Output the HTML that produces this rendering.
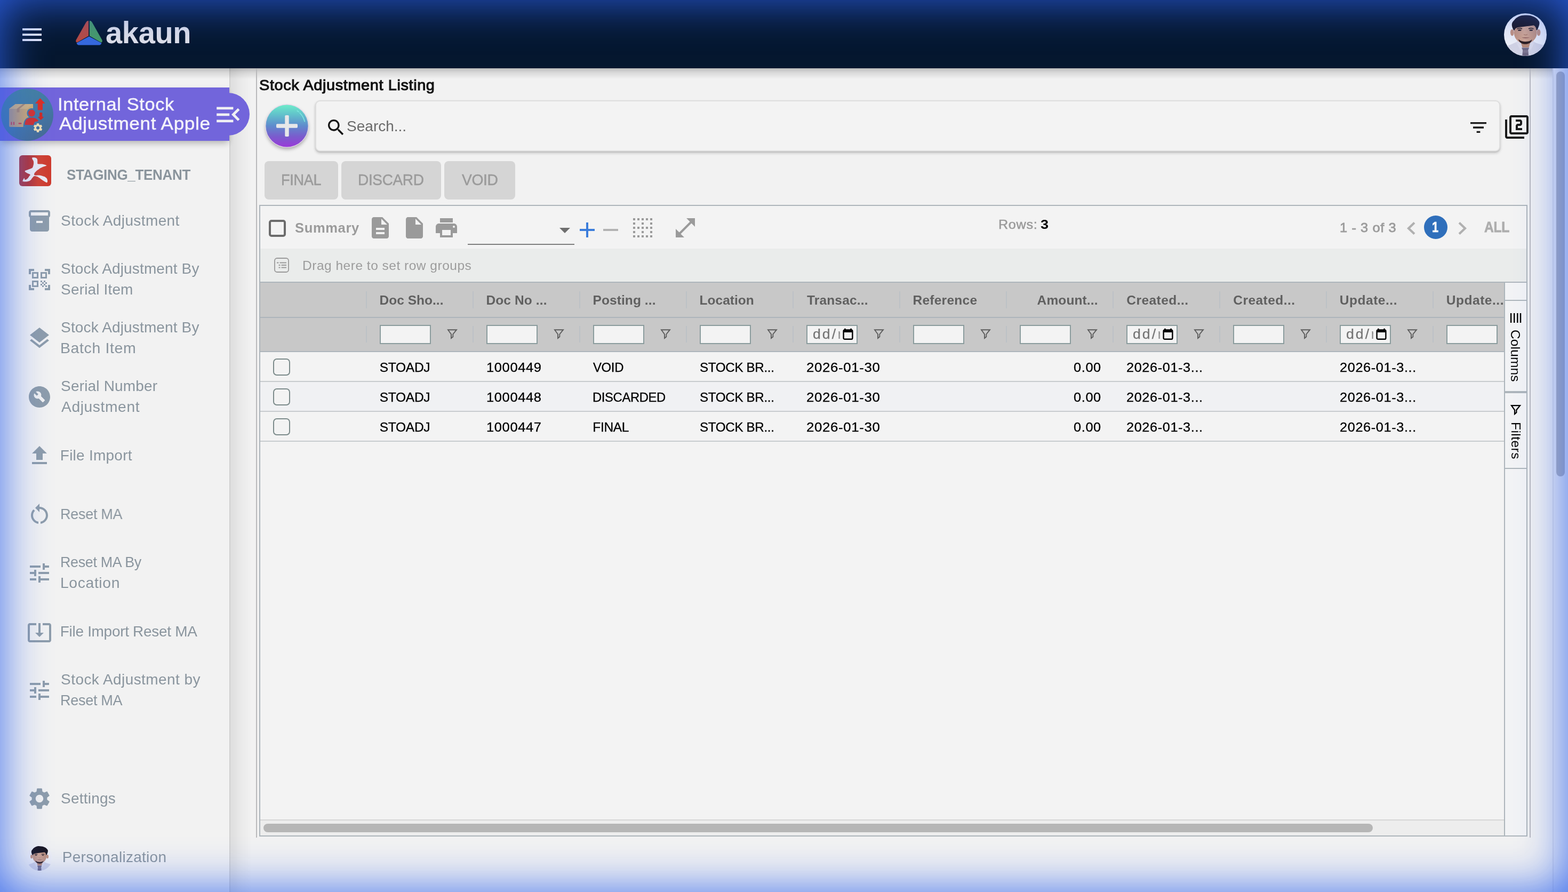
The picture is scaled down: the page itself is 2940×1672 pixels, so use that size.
<!DOCTYPE html>
<html lang="en">
<head>
<meta charset="utf-8">
<title>Stock Adjustment Listing</title>
<style>
*{box-sizing:border-box;margin:0;padding:0}
html,body{width:2940px;height:1672px;overflow:hidden;background:#f2f2f2}
body{font-family:"Liberation Sans",sans-serif;position:relative}
#page{position:absolute;left:0;top:0;width:2940px;height:1672px;overflow:hidden;will-change:transform}
.t{position:absolute;white-space:nowrap;line-height:1;display:block;transform-origin:0 50%}
.i{position:absolute;display:block;overflow:visible}
.b{position:absolute;display:block}
#glow{position:absolute;left:0;top:0;width:2940px;height:1672px;pointer-events:none;box-shadow:inset 0 0 86px 0 rgba(46,98,236,.94)}
#vscroll{position:absolute;left:2911px;top:128px;width:29px;height:1544px;background:#f0f0f2;border-left:2px solid #dedee4}
#vthumb{position:absolute;left:5px;top:6px;width:16px;height:759px;border-radius:8px;background:#b4b4b8}

h1.t{font-weight:400}
@media (max-width:1600px){html,body{width:1470px;height:836px}#page{transform:scale(.5);transform-origin:0 0}}
ul{list-style:none}a{color:inherit;text-decoration:none}

</style>
</head>
<body>
<div id="page">
<div id="underlay">
<div class="b" style="left:0px;top:128px;width:2940px;height:20px;background:linear-gradient(to bottom,rgba(0,0,0,.22),rgba(0,0,0,.10) 40%,rgba(0,0,0,0))"></div>
</div>
<aside id="sidenav">
<div class="b" style="left:430px;top:128px;width:50px;height:1544px;background:linear-gradient(to right,rgba(0,0,0,.085),rgba(0,0,0,.03) 45%,rgba(0,0,0,0) 85%)"></div>
<div class="b" style="left:430px;top:128px;width:2px;height:1544px;background:rgba(0,0,0,.06)"></div>
<div class="b" style="left:0px;top:164px;width:430px;height:100px;background:#7265db;box-shadow:0 6px 12px -2px rgba(0,0,0,.28)"></div>
<div class="b" style="left:388px;top:174px;width:80px;height:80px;background:#7265db;border-radius:50%"></div>
<div class="b" style="left:0px;top:164px;width:430px;height:100px;background:#7265db"></div>
<svg class="i" style="left:398.8px;top:186.2px;" width="57.6" height="57.6" viewBox="0 0 24 24"><path fill="#f0f0f4" d="M3 18h13v-2H3v2zm0-5h10v-2H3v2zm0-7v2h13V6H3zm18 9.59L17.42 12 21 8.41 19.59 7l-5 5 5 5L21 15.59z"/></svg>
<svg class="i" style="left:2px;top:166px" width="98" height="98" viewBox="0 0 98 98">
<defs><linearGradient id="apg" x1="0.2" y1="0" x2="0.8" y2="1"><stop offset="0" stop-color="#46859d"/><stop offset=".55" stop-color="#4379a6"/><stop offset="1" stop-color="#476a93"/></linearGradient>
<linearGradient id="bxg" x1="0" y1="0" x2="1" y2="0"><stop offset="0" stop-color="#b59b80"/><stop offset="1" stop-color="#d8ae6c"/></linearGradient></defs>
<circle cx="49" cy="49" r="49" fill="url(#apg)"/>
<path d="M15 38 L27 29 L60 29 L60 45 L48 60 L45 72 L17 72 Q15 72 15 70 Z" fill="url(#bxg)"/>
<path d="M15 38 L27 29 L60 29 L49 38 Z" fill="#d6b57e"/>
<path d="M29.500 38 L41 29 L45.500 29 L34.500 38 L34.500 44.500 L29.500 44.500 Z" fill="#ae8a6c"/>
<rect x="18.500" y="62.500" width="2" height="5.500" fill="#cf3a4a"/><rect x="23" y="62.500" width="2" height="5.500" fill="#cf3a4a"/><rect x="32.500" y="64.200" width="6" height="2.400" rx="1" fill="#cf3a4a"/>
<circle cx="57.500" cy="46" r="9.200" fill="#4379a6"/><path d="M41.500 72 C41.500 58 48 53 57.500 53 C67 53 72 57 72 62 L64 70 L41.500 72 Z" fill="#4379a6"/>
<circle cx="57.500" cy="46" r="6.400" fill="#d8322d"/>
<path d="M44.500 68 C44.500 58 50 54.500 57.500 54.500 C64 54.500 68.500 57 70 61 L63 62.500 L60.500 68.500 Z" fill="#d3302c"/>
<path d="M73.200 18.600 L81.800 27.400 L77.400 27.400 L77.400 39.800 L69.200 39.800 L69.200 27.400 L64.600 27.400 Z" fill="#dc2f25" stroke="#dc2f25" stroke-width="1" stroke-linejoin="round"/>
<path d="M72.600 45.600 L76.800 45.600 L76.800 53.400 L79.600 53.400 L74.700 58.600 L69.800 53.400 L72.600 53.400 Z" fill="#cf2c26" stroke="#cf2c26" stroke-width="1" stroke-linejoin="round"/>
<g transform="translate(58.600 63.100) scale(.87)"><path fill="#f1dfb2" d="M19.140 12.940c.04-.3.060-.61.060-.94 0-.32-.02-.64-.07-.94l2.030-1.580c.18-.14.230-.41.120-.61l-1.920-3.320c-.12-.22-.37-.29-.59-.22l-2.390.960c-.5-.38-1.030-.7-1.620-.94l-.36-2.540c-.04-.24-.24-.41-.48-.41h-3.840c-.24 0-.43.170-.47.410l-.36 2.540c-.59.240-1.130.570-1.620.940l-2.390-.96c-.22-.08-.47 0-.59.220L2.740 8.870c-.12.210-.08.470.120.610l2.030 1.580c-.05.300-.09.630-.09.940s.020.640.070.940l-2.030 1.580c-.18.140-.23.410-.12.610l1.920 3.320c.120.220.370.290.590.220l2.390-.96c.5.380 1.030.7 1.620.94l.36 2.540c.05.240.240.410.480.410h3.840c.24 0 .44-.17.470-.41l.36-2.540c.59-.24 1.130-.56 1.620-.94l2.390.960c.22.080.47 0 .59-.22l1.920-3.320c.12-.22.070-.47-.12-.61l-2.010-1.580zM12 15.600c-1.980 0-3.600-1.620-3.600-3.600s1.620-3.600 3.600-3.600 3.600 1.620 3.600 3.600-1.620 3.600-3.600 3.600z"/></g>
</svg>
<span class="t" style="left:108.32px;top:179px;font-size:33px;letter-spacing:0.600px;transform:scaleX(1.0409);color:#f4f3fb;-webkit-text-stroke:0.45px #f4f3fb;">Internal Stock</span>
<span class="t" style="left:111.00px;top:215px;font-size:33px;letter-spacing:0.600px;transform:scaleX(1.0645);color:#f4f3fb;-webkit-text-stroke:0.45px #f4f3fb;">Adjustment Apple</span>
<svg class="i" style="left:36px;top:291px" width="60" height="58" viewBox="0 0 60 58">
<defs><linearGradient id="tng" x1="0" y1="0" x2="1" y2="0"><stop offset="0" stop-color="#a93d4d"/><stop offset=".28" stop-color="#b2353a"/><stop offset=".6" stop-color="#d14434"/><stop offset="1" stop-color="#cf3a2c"/></linearGradient></defs>
<rect width="60" height="58" rx="6" fill="url(#tng)"/>
<path d="M25.6 4.3 C27.0 4.1 28.2 4.0 30.0 4.6 C31.8 5.2 32.4 5.4 33.4 6.8 C34.4 8.2 34.0 8.8 34.2 10.5 C34.4 12.2 34.0 12.7 34.3 14.0 C34.6 15.3 33.3 15.6 35.3 16.2 C37.3 16.8 39.5 16.1 43.0 16.6 C46.5 17.1 48.5 17.8 50.3 18.5 C52.1 19.2 52.1 19.0 50.6 19.8 C49.1 20.6 47.1 20.7 44.0 22.1 C40.9 23.5 40.0 24.0 37.1 25.9 C34.2 27.8 33.6 28.2 31.5 30.3 C29.4 32.4 28.6 33.3 28.2 35.0 C27.8 36.7 27.7 37.0 29.8 37.6 C31.9 38.2 33.5 37.2 37.1 37.6 C40.7 38.0 42.2 38.4 45.3 39.4 C48.4 40.4 48.5 40.4 50.3 42.1 C52.0 43.8 52.3 44.5 52.8 46.5 C53.3 48.5 53.3 50.0 52.4 50.8 C51.5 51.6 51.1 50.9 49.0 49.9 C46.9 48.9 46.2 48.3 43.4 46.5 C40.6 44.7 39.6 43.7 37.1 42.1 C34.6 40.5 34.9 40.5 32.8 39.8 C30.7 39.1 29.9 38.5 28.0 39.2 C26.1 39.9 26.3 40.8 24.6 42.6 C22.9 44.4 23.1 45.6 20.9 47.1 C18.7 48.6 18.4 48.7 15.3 49.2 C12.2 49.7 9.8 49.5 7.8 49.2 C5.8 48.9 6.2 49.3 6.6 47.8 C7.0 46.3 8.4 43.3 9.4 42.9 C10.4 42.5 9.5 45.6 10.9 45.9 C12.3 46.2 13.4 45.6 15.3 44.0 C17.2 42.4 17.8 40.8 19.0 39.0 C20.2 37.2 21.6 37.6 20.4 36.2 C19.2 34.8 16.3 34.5 14.0 33.0 C11.7 31.5 10.1 31.0 10.7 29.6 C11.3 28.2 13.7 28.3 16.5 27.1 C19.3 25.9 20.6 26.0 22.8 24.6 C25.0 23.2 24.9 23.7 25.9 20.9 C26.9 18.1 27.3 15.9 27.1 12.8 C26.9 9.7 25.6 9.5 24.9 7.8 C24.2 6.1 24.0 6.2 24.2 5.4 C24.4 4.6 24.2 4.5 25.6 4.3 Z" fill="#ecebf3"/>
</svg>
<span class="t" style="left:124.59px;top:315px;font-size:27px;letter-spacing:-0.350px;transform:scaleX(0.9647);font-weight:700;color:#8a949c;">STAGING_TENANT</span>
<nav aria-label="Main menu">
<ul>
<li>
<a>
<svg class="i" style="left:50px;top:390px;" width="48" height="48" viewBox="0 0 24 24"><path fill="#8e9dab" d="M20 2H4c-1 0-2 .9-2 2v3.01c0 .72.43 1.34 1 1.69V20c0 1.1 1.1 2 2 2h14c.9 0 2-.9 2-2V8.7c.57-.35 1-.97 1-1.69V4c0-1.1-1-2-2-2zm-5 12H9v-2h6v2zm5-7H4V4h16v3z"/></svg>
<span class="t" style="left:114.12px;top:400px;font-size:28px;letter-spacing:0.394px;color:#8a959e;">Stock Adjustment</span>
</a>
</li>
<li>
<a>
<svg class="i" style="left:50px;top:500px;" width="48" height="48" viewBox="0 0 24 24"><path fill="#8e9dab" d="M9.5 6.5v3h-3v-3h3M11 5H5v6h6V5zm-1.5 9.5v3h-3v-3h3M11 13H5v6h6v-6zm6.5-6.5v3h-3v-3h3M19 5h-6v6h6V5zm-6 8h1.5v1.5H13V13zm1.5 1.5H16V16h-1.5v-1.5zM16 13h1.5v1.5H16V13zm-3 3h1.5v1.5H13V16zm1.5 1.5H16V19h-1.5v-1.5zM16 16h1.5v1.5H16V16zm1.5-1.5H19V16h-1.5v-1.5zm0 3H19V19h-1.5v-1.5zM22 7h-2V4h-3V2h5v5zm0 15v-5h-2v3h-3v2h5zM2 22h5v-2H4v-3H2v5zM2 2v5h2V4h3V2H2z"/></svg>
<span class="t" style="left:114.12px;top:490px;font-size:28px;letter-spacing:0.141px;color:#8a959e;">Stock Adjustment By</span>
<span class="t" style="left:114.12px;top:529px;font-size:28px;letter-spacing:0.150px;color:#8a959e;">Serial Item</span>
</a>
</li>
<li>
<a>
<svg class="i" style="left:50px;top:610px;" width="48" height="48" viewBox="0 0 24 24"><path fill="#8e9dab" d="M11.99 18.54l-7.37-5.73L3 14.07l9 7 9-7-1.63-1.27-7.38 5.74zM12 16l7.36-5.73L21 9l-9-7-9 7 1.63 1.27L12 16z"/></svg>
<span class="t" style="left:114.12px;top:600px;font-size:28px;letter-spacing:0.141px;color:#8a959e;">Stock Adjustment By</span>
<span class="t" style="left:112.77px;top:639px;font-size:28px;letter-spacing:0.600px;transform:scaleX(1.0177);color:#8a959e;">Batch Item</span>
</a>
</li>
<li>
<a>
<svg class="i" style="left:50px;top:720px;" width="48" height="48" viewBox="0 0 24 24"><path fill="#8e9dab" d="M12 2C6.48 2 2 6.48 2 12s4.48 10 10 10 10-4.48 10-10S17.52 2 12 2zm4.9 13.49l-1.4 1.4c-.2.2-.51.2-.71 0l-3.41-3.41c-1.22.43-2.64.17-3.62-.81-1.11-1.11-1.3-2.79-.59-4.1l2.35 2.35 1.41-1.41-2.35-2.34c1.32-.71 2.99-.52 4.1.59.98.98 1.24 2.4.81 3.62l3.41 3.41c.19.19.19.51 0 .7z"/></svg>
<span class="t" style="left:114.12px;top:710px;font-size:28px;letter-spacing:0.172px;color:#8a959e;">Serial Number</span>
<span class="t" style="left:115.00px;top:749px;font-size:28px;letter-spacing:0.600px;transform:scaleX(1.0071);color:#8a959e;">Adjustment</span>
</a>
</li>
<li>
<a>
<svg class="i" style="left:50px;top:830px;" width="48" height="48" viewBox="0 0 24 24"><path fill="#8e9dab" d="M5 20h14v-2H5v2zm0-10h4v6h6v-6h4l-7-7-7 7z"/></svg>
<span class="t" style="left:112.81px;top:840px;font-size:28px;letter-spacing:0.244px;color:#8a959e;">File Import</span>
</a>
</li>
<li>
<a>
<svg class="i" style="left:50px;top:940.4px;" width="48" height="48" viewBox="0 0 24 24"><path fill="#8e9dab" d="M12 5V2L8 6l4 4V7c3.31 0 6 2.69 6 6 0 2.97-2.17 5.43-5 5.91v2.02c3.95-.49 7-3.85 7-7.93 0-4.42-3.58-8-8-8zm-6 8c0-1.65.67-3.15 1.76-4.24L6.34 7.34C4.9 8.79 4 10.79 4 13c0 4.08 3.05 7.44 7 7.93v-2.02c-2.83-.48-5-2.94-5-5.91z"/></svg>
<span class="t" style="left:112.88px;top:950px;font-size:28px;letter-spacing:-0.350px;transform:scaleX(0.9677);color:#8a959e;">Reset MA</span>
</a>
</li>
<li>
<a>
<svg class="i" style="left:50px;top:1050px;" width="48" height="48" viewBox="0 0 24 24"><path fill="#8e9dab" d="M3 17v2h6v-2H3zM3 5v2h10V5H3zm10 16v-2h8v-2h-8v-2h-2v6h2zM7 9v2H3v2h4v2h2V9H7zm14 4v-2H11v2h10zm-6-4h2V7h4V5h-4V3h-2v6z"/></svg>
<span class="t" style="left:112.90px;top:1040px;font-size:28px;letter-spacing:-0.350px;transform:scaleX(0.9614);color:#8a959e;">Reset MA By</span>
<span class="t" style="left:112.79px;top:1079px;font-size:28px;letter-spacing:0.600px;transform:scaleX(1.0122);color:#8a959e;">Location</span>
</a>
</li>
<li>
<a>
<svg class="i" style="left:50px;top:1160.5px;" width="48" height="48" viewBox="0 0 24 24"><path fill="#8e9dab" d="M12 16.5l4-4h-3v-9h-2v9H8l4 4zm9-13h-6v1.99h6v14.03H3V5.49h6V3.5H3c-1.1 0-2 .9-2 2v14c0 1.1.9 2 2 2h18c1.1 0 2-.9 2-2v-14c0-1.1-.9-2-2-2z"/></svg>
<span class="t" style="left:112.81px;top:1170px;font-size:28px;letter-spacing:-0.311px;color:#8a959e;">File Import Reset MA</span>
</a>
</li>
<li>
<a>
<svg class="i" style="left:50px;top:1270px;" width="48" height="48" viewBox="0 0 24 24"><path fill="#8e9dab" d="M3 17v2h6v-2H3zM3 5v2h10V5H3zm10 16v-2h8v-2h-8v-2h-2v6h2zM7 9v2H3v2h4v2h2V9H7zm14 4v-2H11v2h10zm-6-4h2V7h4V5h-4V3h-2v6z"/></svg>
<span class="t" style="left:114.12px;top:1260px;font-size:28px;letter-spacing:0.425px;color:#8a959e;">Stock Adjustment by</span>
<span class="t" style="left:112.88px;top:1299px;font-size:28px;letter-spacing:-0.350px;transform:scaleX(0.9677);color:#8a959e;">Reset MA</span>
</a>
</li>
<li>
<a>
<svg class="i" style="left:50px;top:1473px;" width="48" height="48" viewBox="0 0 24 24"><path fill="#8e9dab" d="M19.14 12.94c.04-.3.06-.61.06-.94 0-.32-.02-.64-.07-.94l2.03-1.58c.18-.14.23-.41.12-.61l-1.92-3.32c-.12-.22-.37-.29-.59-.22l-2.39.96c-.5-.38-1.03-.7-1.62-.94l-.36-2.54c-.04-.24-.24-.41-.48-.41h-3.84c-.24 0-.43.17-.47.41l-.36 2.54c-.59.24-1.13.57-1.62.94l-2.39-.96c-.22-.08-.47 0-.59.22L2.74 8.87c-.12.21-.08.47.12.61l2.03 1.58c-.05.3-.09.63-.09.94s.02.64.07.94l-2.03 1.58c-.18.14-.23.41-.12.61l1.92 3.32c.12.22.37.29.59.22l2.39-.96c.5.38 1.03.7 1.62.94l.36 2.54c.05.24.24.41.48.41h3.84c.24 0 .44-.17.47-.41l.36-2.54c.59-.24 1.13-.56 1.62-.94l2.39.96c.22.08.47 0 .59-.22l1.92-3.32c.12-.22.07-.47-.12-.61l-2.01-1.58zM12 15.6c-1.98 0-3.6-1.62-3.6-3.6s1.62-3.6 3.6-3.6 3.6 1.62 3.6 3.6-1.62 3.6-3.6 3.6z"/></svg>
<span class="t" style="left:114.12px;top:1483px;font-size:28px;letter-spacing:0.225px;color:#8a959e;">Settings</span>
</a>
</li>
<li>
<a>
<svg class="i" style="left:50px;top:1584px" width="48" height="48" viewBox="0 0 80 80">
<defs><clipPath id="avp"><circle cx="40" cy="40" r="40"/></clipPath>
<linearGradient id="avps" x1="0" y1="0" x2="1" y2="0"><stop offset="0" stop-color="#c0927e"/><stop offset=".45" stop-color="#d2a793"/><stop offset="1" stop-color="#bd8f7b"/></linearGradient></defs>
<g clip-path="url(#avp)">
<rect width="80" height="80" fill="#f1f1f5"/>
<path d="M0 80 L3 63 C10 59 17 57 23 54 L29 50 L52 50 L57 54 C63 57 70 58 77 61 L80 80 Z" fill="#d3d4e4"/>
<path d="M23 54 L29 50 L34.500 64 L31 70 Z" fill="#dcdcea"/><path d="M57 54 L52 50 L46.500 64 L50 70 Z" fill="#dcdcea"/>
<path d="M30 49 L51 49 L46.500 64 L34.500 64 Z" fill="#b88a77"/>
<path d="M33 64.400 L47.200 64.400 L45.200 69 L46.200 80 L34.200 80 L35.200 69 Z" fill="#6f6882"/>
<path d="M35.500 69 L44.800 69 L45.500 74 L34.800 74 Z" fill="#7d768f"/>
<ellipse cx="15.300" cy="36" rx="3.400" ry="6.200" fill="#c2927f"/>
<ellipse cx="65" cy="36" rx="3.400" ry="6.200" fill="#c2927f"/>
<path d="M19 26 C19 20 25 16 40 16 C55 16 61.500 20 61.500 26 L61.500 38 C61.500 47 52 57 40 57 C28 57 19 47 19 38 Z" fill="url(#avps)"/>
<path d="M27 48.500 C31 52 35 53 40 53 C45 53 49 52 52.500 49 C51.500 55 46 57.800 40 57.800 C34 57.800 28.500 55 27 48.500 Z" fill="#2c1d1e"/>
<path d="M33 45.500 C37 44.600 43 44.600 48.500 45.500 C44 47.400 37 47.400 33 45.500 Z" fill="#9c6b62"/>
<path d="M37 39.500 C39 40.800 42 40.800 44 39.500" fill="none" stroke="#a97966" stroke-width="1.200"/>
<path d="M24.500 29.400 C27 27.600 31 27.600 34 29" fill="none" stroke="#241a1c" stroke-width="1.500"/>
<path d="M46 29 C49 27.600 53 27.600 55.500 29.400" fill="none" stroke="#241a1c" stroke-width="1.500"/>
<ellipse cx="29.300" cy="31.600" rx="3.300" ry="1.500" fill="#3a2c30"/>
<ellipse cx="50.700" cy="31.600" rx="3.300" ry="1.500" fill="#3a2c30"/>
<path d="M17.800 31 C14 24 13 18 19 13 C24 6 33 3 41 3.600 C52 3 62 8 66 15.500 C67.500 20 65 25 63 30 C62.500 31.500 61.500 32 60.600 31 C60.600 27 58.500 24 55.600 22.600 C47 24 38 25 28 26 C23.500 26.500 20.500 28.500 19.600 31.500 C19 32.500 18.200 32 17.800 31 Z" fill="#19151f"/>
</g></svg>
<span class="t" style="left:116.81px;top:1593px;font-size:28px;letter-spacing:0.265px;color:#8a959e;">Personalization</span>
</a>
</li>
</ul>
</nav>
</aside>
<main id="content">
<div class="b" style="left:480px;top:128px;width:2px;height:1442px;background:#b9b9bb"></div>
<div class="b" style="left:2868.4px;top:128px;width:2px;height:1442px;background:#b9b9bf"></div>
<h1 class="t" style="left:486.10px;top:146px;font-size:28px;letter-spacing:0.600px;transform:scaleX(1.0316);color:#121212;-webkit-text-stroke:1.1px #121212;">Stock Adjustment Listing</h1>
<svg class="i" style="left:488px;top:186px" width="100" height="104" viewBox="-10 -10 100 104">
<defs><linearGradient id="fabg" x1="0" y1="0" x2="0" y2="1"><stop offset="0" stop-color="#6eecca"/><stop offset=".22" stop-color="#62c4cb"/><stop offset=".5" stop-color="#5f8bcd"/><stop offset=".75" stop-color="#7a5ccd"/><stop offset="1" stop-color="#9a3ad8"/></linearGradient>
<filter id="fabs" x="-30%" y="-30%" width="160%" height="170%"><feGaussianBlur stdDeviation="3.2"/></filter></defs>
<circle cx="40" cy="44" r="40" fill="rgba(0,0,0,.30)" filter="url(#fabs)"/>
<circle cx="40" cy="40" r="40.8" fill="#e3d6e9"/>
<circle cx="40" cy="40" r="39.6" fill="url(#fabg)"/>
<path d="M59.2 11.6 A34 34 0 0 1 73.2 31.6" fill="none" stroke="#7fe9e0" stroke-width="1.6" stroke-linecap="round" stroke-dasharray="3.5 3 40"/>
<rect x="20" y="36.3" width="40" height="7.4" rx="1.8" fill="#e7e7e9"/>
<rect x="36.3" y="20" width="7.4" height="40" rx="1.8" fill="#e7e7e9"/>
</svg>
<div class="b" style="left:591px;top:188px;width:2222px;height:96px;background:#f3f3f3;border:2px solid #dedede;border-radius:9px;box-shadow:0 3px 5px 0 rgba(0,0,0,.20),0 1px 2px rgba(0,0,0,.10)"></div>
<svg class="i" style="left:610px;top:219px;" width="40" height="40" viewBox="0 0 24 24"><path fill="#151515" d="M15.5 14h-.79l-.28-.27C15.41 12.59 16 11.11 16 9.5 16 5.91 13.09 3 9.5 3S3 5.91 3 9.5 5.91 16 9.5 16c1.61 0 3.09-.59 4.23-1.57l.27.28v.79l5 4.99L20.49 19l-4.99-5zm-6 0C7.01 14 5 11.99 5 9.5S7.01 5 9.5 5 14 7.01 14 9.5 11.99 14 9.5 14z"/></svg>
<span class="t" style="left:650.12px;top:223px;font-size:28px;letter-spacing:-0.006px;color:#6a6a6a;">Search...</span>
<svg class="i" style="left:2752px;top:219px;" width="40" height="40" viewBox="0 0 24 24"><path fill="#1a1a1a" d="M10 18h4v-2h-4v2zM3 6v2h18V6H3zm3 7h12v-2H6v2z"/></svg>
<svg class="i" style="left:2820px;top:214px;" width="48" height="48" viewBox="0 0 24 24"><path fill="#1a1a1a" d="M3 5H1v16c0 1.1.9 2 2 2h16v-2H3V5zm18-4H7c-1.1 0-2 .9-2 2v14c0 1.1.9 2 2 2h14c1.1 0 2-.9 2-2V3c0-1.1-.9-2-2-2zm0 16H7V3h14v14zm-4-4h-4v-2h2c1.1 0 2-.89 2-2V7c0-1.11-.9-2-2-2h-4v2h4v2h-2c-1.1 0-2 .89-2 2v4h6v-2z"/></svg>
<div role="button" aria-disabled="true">
<div class="b" style="left:496px;top:302px;width:138px;height:72px;background:#d5d5d5;border-radius:8px"></div>
<span class="t" style="left:527.48px;top:323px;font-size:29px;letter-spacing:-0.350px;transform:scaleX(0.9358);color:#9b9b9b;-webkit-text-stroke:0.5px #9b9b9b;">FINAL</span>
</div>
<div role="button" aria-disabled="true">
<div class="b" style="left:640px;top:302px;width:187px;height:72px;background:#d5d5d5;border-radius:8px"></div>
<span class="t" style="left:671.41px;top:323px;font-size:29px;letter-spacing:-0.350px;transform:scaleX(0.9653);color:#9b9b9b;-webkit-text-stroke:0.5px #9b9b9b;">DISCARD</span>
</div>
<div role="button" aria-disabled="true">
<div class="b" style="left:833px;top:302px;width:133px;height:72px;background:#d5d5d5;border-radius:8px"></div>
<span class="t" style="left:866.00px;top:323px;font-size:29px;letter-spacing:-0.350px;transform:scaleX(0.9732);color:#9b9b9b;-webkit-text-stroke:0.5px #9b9b9b;">VOID</span>
</div>
<section id="grid">
<div class="b" style="left:486px;top:384px;width:2378px;height:1184px;border:2px solid #adb5bb;background:#f3f3f3"></div>
<div role="toolbar">
<label>
<div class="b" style="left:504px;top:412px;width:32px;height:32px;border:4px solid #6b6b6b;border-radius:5px"></div>
<span class="t" style="left:552.60px;top:415px;font-size:25px;letter-spacing:0.600px;transform:scaleX(1.0229);font-weight:700;color:#9b9b9b;">Summary</span>
</label>
<svg class="i" style="left:689px;top:403px;" width="48" height="48" viewBox="0 0 24 24"><path fill="#9a9a9a" d="M14 2H6c-1.1 0-1.99.9-1.99 2L4 20c0 1.1.89 2 1.99 2H18c1.1 0 2-.9 2-2V8l-6-6zm2 16H8v-2h8v2zm0-4H8v-2h8v2zm-3-5V3.5L18.5 9H13z"/></svg>
<svg class="i" style="left:753px;top:403px;" width="48" height="48" viewBox="0 0 24 24"><path fill="#9a9a9a" d="M6 2c-1.1 0-1.99.9-1.99 2L4 20c0 1.1.89 2 1.99 2H18c1.1 0 2-.9 2-2V8l-6-6H6zm7 7V3.5L18.5 9H13z"/></svg>
<svg class="i" style="left:813.4px;top:403px;" width="48" height="48" viewBox="0 0 24 24"><path fill="#9a9a9a" d="M19 8H5c-1.66 0-3 1.34-3 3v6h4v4h12v-4h4v-6c0-1.66-1.34-3-3-3zm-3 11H8v-5h8v5zm3-7c-.55 0-1-.45-1-1s.45-1 1-1 1 .45 1 1-.45 1-1 1zm-1-9H6v4h12V3z"/></svg>
<div class="b" style="left:877px;top:457px;width:200px;height:2px;background:#7d7d7d"></div>
<svg class="i" style="left:1035px;top:407px;" width="48" height="48" viewBox="0 0 24 24"><path fill="#6e6e6e" d="M7 10l5 5 5-5z"/></svg>
<svg class="i" style="left:1077px;top:407px;" width="48" height="48" viewBox="0 0 24 24"><path fill="#3b7ddb" d="M19 13h-6v6h-2v-6H5v-2h6V5h2v6h6v2z"/></svg>
<svg class="i" style="left:1121px;top:407px;" width="48" height="48" viewBox="0 0 24 24"><path fill="#b3b3b3" d="M19 13H5v-2h14v2z"/></svg>
<svg class="i" style="left:1181px;top:403px;" width="48" height="48" viewBox="0 0 24 24"><path fill="#9a9a9a" d="M7 5h2V3H7v2zm0 8h2v-2H7v2zm0 8h2v-2H7v2zm4-4h2v-2h-2v2zm0 4h2v-2h-2v2zm-8 0h2v-2H3v2zm0-4h2v-2H3v2zm0-4h2v-2H3v2zm0-4h2V7H3v2zm0-4h2V3H3v2zm8 8h2v-2h-2v2zm8 4h2v-2h-2v2zm0-4h2v-2h-2v2zm0 8h2v-2h-2v2zm0-12h2V7h-2v2zm-8 0h2V7h-2v2zm8-6v2h2V3h-2zm-8 2h2V3h-2v2zm4 16h2v-2h-2v2zm0-8h2v-2h-2v2zm0-8h2V3h-2v2z"/></svg>
<svg class="i" style="left:1261px;top:403px;" width="48" height="48" viewBox="0 0 24 24"><path fill="#9a9a9a" d="M21 11V3h-8l3.29 3.29-10 10L3 13v8h8l-3.29-3.29 10-10z"/></svg>
<div>
<span class="t" style="left:1872.03px;top:409px;font-size:24px;letter-spacing:0.600px;transform:scaleX(1.0517);color:#9a9a9a;-webkit-text-stroke:0.5px #9a9a9a;">Rows:</span>
<span class="t" style="left:1950.58px;top:409px;font-size:24px;transform:scaleX(1.1313);font-weight:700;color:#000;">3</span>
</div>
<div role="navigation" aria-label="Pagination">
<span class="t" style="left:2512.42px;top:415px;font-size:24px;letter-spacing:0.600px;transform:scaleX(1.0548);color:#9b9b9b;-webkit-text-stroke:0.8px #9b9b9b;">1 - 3 of 3</span>
<svg class="i" style="left:2634px;top:413px" width="24" height="30" viewBox="0 0 24 30"><path d="M18 4.5 L7 15 L18 25.5" fill="none" stroke="#b0b0b0" stroke-width="4.2"/></svg>
<div class="b" style="left:2670px;top:404px;width:44px;height:44px;background:#2f6fbb;border-radius:50%"></div>
<span class="t" style="left:2685.04px;top:412px;font-size:28px;transform:scaleX(0.7771);font-weight:700;color:#fff;-webkit-text-stroke:0.7px #fff;">1</span>
<svg class="i" style="left:2730px;top:413px" width="24" height="30" viewBox="0 0 24 30"><path d="M6 4.5 L17 15 L6 25.5" fill="none" stroke="#b0b0b0" stroke-width="4.2"/></svg>
<span class="t" style="left:2782.62px;top:412px;font-size:27.5px;letter-spacing:-0.350px;transform:scaleX(0.8948);font-weight:700;color:#adadad;-webkit-text-stroke:0.8px #adadad;">ALL</span>
</div>
</div>
<div>
<div class="b" style="left:488px;top:466px;width:2374px;height:62px;background:#eaeceb"></div>
<svg class="i" style="left:514px;top:483px" width="28" height="28" viewBox="0 0 28 28">
<rect x="1" y="1" width="26" height="26" rx="4.5" fill="none" stroke="#9a9a9a" stroke-width="1.8"/>
<path d="M5 9.5h3.5M10.5 9.5H23M8.5 14h3M13.5 14H23M8.5 18.5h3M13.5 18.5H23" stroke="#9a9a9a" stroke-width="1.8" fill="none"/></svg>
<span class="t" style="left:567.09px;top:486px;font-size:24.5px;letter-spacing:0.500px;color:#9c9c9c;">Drag here to set row groups</span>
</div>
<div class="b" style="left:488px;top:530px;width:2332px;height:130px;background:#c8c8c8"></div>
<div class="b" style="left:488px;top:528px;width:2374px;height:2px;background:#adb5bb"></div>
<div class="b" style="left:488px;top:594px;width:2332px;height:2px;background:#adb5bb"></div>
<div class="b" style="left:488px;top:658px;width:2332px;height:2px;background:#adb5bb"></div>
<div role="row">
<div class="b" style="left:686px;top:546px;width:2px;height:32px;background:#bcc1c6"></div>
<span class="t" role="columnheader" style="left:711.47px;top:551px;font-size:24.5px;letter-spacing:0.022px;font-weight:700;color:#606060;">Doc Sho...</span>
<div class="b" style="left:886px;top:546px;width:2px;height:32px;background:#bcc1c6"></div>
<span class="t" role="columnheader" style="left:911.47px;top:551px;font-size:24.5px;letter-spacing:0.111px;font-weight:700;color:#606060;">Doc No ...</span>
<div class="b" style="left:1086px;top:546px;width:2px;height:32px;background:#bcc1c6"></div>
<span class="t" role="columnheader" style="left:1111.47px;top:551px;font-size:24.5px;letter-spacing:0.092px;font-weight:700;color:#606060;">Posting ...</span>
<div class="b" style="left:1286px;top:546px;width:2px;height:32px;background:#bcc1c6"></div>
<span class="t" role="columnheader" style="left:1311.47px;top:551px;font-size:24.5px;letter-spacing:0.034px;font-weight:700;color:#606060;">Location</span>
<div class="b" style="left:1486px;top:546px;width:2px;height:32px;background:#bcc1c6"></div>
<span class="t" role="columnheader" style="left:1513.00px;top:551px;font-size:24.5px;letter-spacing:0.157px;font-weight:700;color:#606060;">Transac...</span>
<div class="b" style="left:1686px;top:546px;width:2px;height:32px;background:#bcc1c6"></div>
<span class="t" role="columnheader" style="left:1711.47px;top:551px;font-size:24.5px;letter-spacing:0.258px;font-weight:700;color:#606060;">Reference</span>
<div class="b" style="left:1886px;top:546px;width:2px;height:32px;background:#bcc1c6"></div>
<span class="t" role="columnheader" style="left:1944.62px;top:551px;font-size:24.5px;letter-spacing:0.110px;font-weight:700;color:#606060;">Amount...</span>
<div class="b" style="left:2086px;top:546px;width:2px;height:32px;background:#bcc1c6"></div>
<span class="t" role="columnheader" style="left:2112.23px;top:551px;font-size:24.5px;letter-spacing:0.474px;font-weight:700;color:#606060;">Created...</span>
<div class="b" style="left:2286px;top:546px;width:2px;height:32px;background:#bcc1c6"></div>
<span class="t" role="columnheader" style="left:2312.23px;top:551px;font-size:24.5px;letter-spacing:0.474px;font-weight:700;color:#606060;">Created...</span>
<div class="b" style="left:2486px;top:546px;width:2px;height:32px;background:#bcc1c6"></div>
<span class="t" role="columnheader" style="left:2511.85px;top:551px;font-size:24.5px;letter-spacing:0.518px;font-weight:700;color:#606060;">Update...</span>
<div class="b" style="left:2686px;top:546px;width:2px;height:32px;background:#bcc1c6"></div>
<span class="t" role="columnheader" style="left:2711.85px;top:551px;font-size:24.5px;letter-spacing:0.518px;font-weight:700;color:#606060;">Update...</span>
</div>
<div role="row">
<div>
<div class="b" style="left:686px;top:611px;width:2px;height:31px;background:#bcc1c6"></div>
<div class="b" style="left:712px;top:609px;width:96px;height:36px;background:#f3f3f3;border:2px solid #8b9c9d"></div>
<svg class="i" style="left:837.2px;top:616px" width="22" height="21" viewBox="0 0 22 21"><path d="M3 2.2 H19 L12.3 10.5 V15.2 L9 18 V10.5 Z" fill="none" stroke="#5c5c5c" stroke-width="1.9" stroke-linejoin="miter"/></svg>
</div>
<div>
<div class="b" style="left:886px;top:611px;width:2px;height:31px;background:#bcc1c6"></div>
<div class="b" style="left:912px;top:609px;width:96px;height:36px;background:#f3f3f3;border:2px solid #8b9c9d"></div>
<svg class="i" style="left:1037.2px;top:616px" width="22" height="21" viewBox="0 0 22 21"><path d="M3 2.2 H19 L12.3 10.5 V15.2 L9 18 V10.5 Z" fill="none" stroke="#5c5c5c" stroke-width="1.9" stroke-linejoin="miter"/></svg>
</div>
<div>
<div class="b" style="left:1086px;top:611px;width:2px;height:31px;background:#bcc1c6"></div>
<div class="b" style="left:1112px;top:609px;width:96px;height:36px;background:#f3f3f3;border:2px solid #8b9c9d"></div>
<svg class="i" style="left:1237.2px;top:616px" width="22" height="21" viewBox="0 0 22 21"><path d="M3 2.2 H19 L12.3 10.5 V15.2 L9 18 V10.5 Z" fill="none" stroke="#5c5c5c" stroke-width="1.9" stroke-linejoin="miter"/></svg>
</div>
<div>
<div class="b" style="left:1286px;top:611px;width:2px;height:31px;background:#bcc1c6"></div>
<div class="b" style="left:1312px;top:609px;width:96px;height:36px;background:#f3f3f3;border:2px solid #8b9c9d"></div>
<svg class="i" style="left:1437.2px;top:616px" width="22" height="21" viewBox="0 0 22 21"><path d="M3 2.2 H19 L12.3 10.5 V15.2 L9 18 V10.5 Z" fill="none" stroke="#5c5c5c" stroke-width="1.9" stroke-linejoin="miter"/></svg>
</div>
<div>
<div class="b" style="left:1486px;top:611px;width:2px;height:31px;background:#bcc1c6"></div>
<div class="b" style="left:1512px;top:609px;width:96px;height:36px;background:#f3f3f3;border:2px solid #8b9c9d"></div>
<span class="t" style="left:1524.17px;top:614px;font-size:25px;letter-spacing:2.800px;transform:scaleX(1.0666);color:#747474;-webkit-text-stroke:0.25px #747474;">dd/</span>
<span class="t" style="width:3.7px;overflow:hidden;left:1570.84px;top:614px;font-size:25px;color:#8a8a8a;">mm/yyyy</span>
<svg class="i" style="left:1580px;top:615px" width="20" height="23" viewBox="0 0 20 23"><path d="M4.4 .8v3.4M15.6 .8v3.4" stroke="#000" stroke-width="2.6" fill="none"/><rect x="1.6" y="3.4" width="16.800" height="17.400" rx="2.4" fill="none" stroke="#000" stroke-width="2.4"/><rect x="1.4" y="3.2" width="17.200" height="4.8" rx="1" fill="#000"/></svg>
<svg class="i" style="left:1637.2px;top:616px" width="22" height="21" viewBox="0 0 22 21"><path d="M3 2.2 H19 L12.3 10.5 V15.2 L9 18 V10.5 Z" fill="none" stroke="#5c5c5c" stroke-width="1.9" stroke-linejoin="miter"/></svg>
</div>
<div>
<div class="b" style="left:1686px;top:611px;width:2px;height:31px;background:#bcc1c6"></div>
<div class="b" style="left:1712px;top:609px;width:96px;height:36px;background:#f3f3f3;border:2px solid #8b9c9d"></div>
<svg class="i" style="left:1837.2px;top:616px" width="22" height="21" viewBox="0 0 22 21"><path d="M3 2.2 H19 L12.3 10.5 V15.2 L9 18 V10.5 Z" fill="none" stroke="#5c5c5c" stroke-width="1.9" stroke-linejoin="miter"/></svg>
</div>
<div>
<div class="b" style="left:1886px;top:611px;width:2px;height:31px;background:#bcc1c6"></div>
<div class="b" style="left:1912px;top:609px;width:96px;height:36px;background:#f3f3f3;border:2px solid #8b9c9d"></div>
<svg class="i" style="left:2037.2px;top:616px" width="22" height="21" viewBox="0 0 22 21"><path d="M3 2.2 H19 L12.3 10.5 V15.2 L9 18 V10.5 Z" fill="none" stroke="#5c5c5c" stroke-width="1.9" stroke-linejoin="miter"/></svg>
</div>
<div>
<div class="b" style="left:2086px;top:611px;width:2px;height:31px;background:#bcc1c6"></div>
<div class="b" style="left:2112px;top:609px;width:96px;height:36px;background:#f3f3f3;border:2px solid #8b9c9d"></div>
<span class="t" style="left:2124.17px;top:614px;font-size:25px;letter-spacing:2.800px;transform:scaleX(1.0666);color:#747474;-webkit-text-stroke:0.25px #747474;">dd/</span>
<span class="t" style="width:3.7px;overflow:hidden;left:2170.84px;top:614px;font-size:25px;color:#8a8a8a;">mm/yyyy</span>
<svg class="i" style="left:2180px;top:615px" width="20" height="23" viewBox="0 0 20 23"><path d="M4.4 .8v3.4M15.6 .8v3.4" stroke="#000" stroke-width="2.6" fill="none"/><rect x="1.6" y="3.4" width="16.800" height="17.400" rx="2.4" fill="none" stroke="#000" stroke-width="2.4"/><rect x="1.4" y="3.2" width="17.200" height="4.8" rx="1" fill="#000"/></svg>
<svg class="i" style="left:2237.2px;top:616px" width="22" height="21" viewBox="0 0 22 21"><path d="M3 2.2 H19 L12.3 10.5 V15.2 L9 18 V10.5 Z" fill="none" stroke="#5c5c5c" stroke-width="1.9" stroke-linejoin="miter"/></svg>
</div>
<div>
<div class="b" style="left:2286px;top:611px;width:2px;height:31px;background:#bcc1c6"></div>
<div class="b" style="left:2312px;top:609px;width:96px;height:36px;background:#f3f3f3;border:2px solid #8b9c9d"></div>
<svg class="i" style="left:2437.2px;top:616px" width="22" height="21" viewBox="0 0 22 21"><path d="M3 2.2 H19 L12.3 10.5 V15.2 L9 18 V10.5 Z" fill="none" stroke="#5c5c5c" stroke-width="1.9" stroke-linejoin="miter"/></svg>
</div>
<div>
<div class="b" style="left:2486px;top:611px;width:2px;height:31px;background:#bcc1c6"></div>
<div class="b" style="left:2512px;top:609px;width:96px;height:36px;background:#f3f3f3;border:2px solid #8b9c9d"></div>
<span class="t" style="left:2524.17px;top:614px;font-size:25px;letter-spacing:2.800px;transform:scaleX(1.0666);color:#747474;-webkit-text-stroke:0.25px #747474;">dd/</span>
<span class="t" style="width:3.7px;overflow:hidden;left:2570.84px;top:614px;font-size:25px;color:#8a8a8a;">mm/yyyy</span>
<svg class="i" style="left:2580px;top:615px" width="20" height="23" viewBox="0 0 20 23"><path d="M4.4 .8v3.4M15.6 .8v3.4" stroke="#000" stroke-width="2.6" fill="none"/><rect x="1.6" y="3.4" width="16.800" height="17.400" rx="2.4" fill="none" stroke="#000" stroke-width="2.4"/><rect x="1.4" y="3.2" width="17.200" height="4.8" rx="1" fill="#000"/></svg>
<svg class="i" style="left:2637.2px;top:616px" width="22" height="21" viewBox="0 0 22 21"><path d="M3 2.2 H19 L12.3 10.5 V15.2 L9 18 V10.5 Z" fill="none" stroke="#5c5c5c" stroke-width="1.9" stroke-linejoin="miter"/></svg>
</div>
<div>
<div class="b" style="left:2686px;top:611px;width:2px;height:31px;background:#bcc1c6"></div>
<div class="b" style="left:2712px;top:609px;width:96px;height:36px;background:#f3f3f3;border:2px solid #8b9c9d"></div>
</div>
</div>
<div role="row">
<div class="b" style="left:488px;top:714px;width:2332px;height:2px;background:#c7cbce"></div>
<div class="b" style="left:512px;top:672px;width:32px;height:32px;border:2px solid #7c8b8b;border-radius:7px;background:#f3f3f3"></div>
<span class="t" role="gridcell" style="left:711.83px;top:677px;font-size:24.5px;letter-spacing:-0.302px;color:#000;-webkit-text-stroke:0.3px #000;">STOADJ</span>
<span class="t" role="gridcell" style="left:911.61px;top:677px;font-size:24.5px;letter-spacing:0.600px;transform:scaleX(1.0409);color:#000;-webkit-text-stroke:0.3px #000;">1000449</span>
<span class="t" role="gridcell" style="left:1112.40px;top:677px;font-size:24.5px;letter-spacing:-0.350px;transform:scaleX(0.9759);color:#000;-webkit-text-stroke:0.3px #000;">VOID</span>
<span class="t" role="gridcell" style="left:1311.84px;top:677px;font-size:24.5px;letter-spacing:-0.350px;transform:scaleX(0.9875);color:#000;-webkit-text-stroke:0.3px #000;">STOCK BR...</span>
<span class="t" role="gridcell" style="left:1512.19px;top:677px;font-size:24.5px;letter-spacing:0.600px;transform:scaleX(1.0546);color:#000;-webkit-text-stroke:0.3px #000;">2026-01-30</span>
<span class="t" role="gridcell" style="left:2012.81px;top:677px;font-size:24.5px;letter-spacing:0.600px;transform:scaleX(1.0352);color:#000;-webkit-text-stroke:0.3px #000;">0.00</span>
<span class="t" role="gridcell" style="left:2111.82px;top:677px;font-size:24.5px;letter-spacing:0.600px;transform:scaleX(1.0313);color:#000;-webkit-text-stroke:0.3px #000;">2026-01-3...</span>
<span class="t" role="gridcell" style="left:2511.81px;top:677px;font-size:24.5px;letter-spacing:0.600px;transform:scaleX(1.0328);color:#000;-webkit-text-stroke:0.3px #000;">2026-01-3...</span>
</div>
<div role="row">
<div class="b" style="left:488px;top:716px;width:2332px;height:54px;background:#f0f1f3"></div>
<div class="b" style="left:488px;top:770px;width:2332px;height:2px;background:#c7cbce"></div>
<div class="b" style="left:512px;top:728px;width:32px;height:32px;border:2px solid #7c8b8b;border-radius:7px;background:#f3f3f3"></div>
<span class="t" role="gridcell" style="left:711.83px;top:733px;font-size:24.5px;letter-spacing:-0.302px;color:#000;-webkit-text-stroke:0.3px #000;">STOADJ</span>
<span class="t" role="gridcell" style="left:911.61px;top:733px;font-size:24.5px;letter-spacing:0.600px;transform:scaleX(1.0409);color:#000;-webkit-text-stroke:0.3px #000;">1000448</span>
<span class="t" role="gridcell" style="left:1111.34px;top:733px;font-size:24.5px;letter-spacing:-0.350px;transform:scaleX(0.9695);color:#000;-webkit-text-stroke:0.3px #000;">DISCARDED</span>
<span class="t" role="gridcell" style="left:1311.84px;top:733px;font-size:24.5px;letter-spacing:-0.350px;transform:scaleX(0.9875);color:#000;-webkit-text-stroke:0.3px #000;">STOCK BR...</span>
<span class="t" role="gridcell" style="left:1512.19px;top:733px;font-size:24.5px;letter-spacing:0.600px;transform:scaleX(1.0546);color:#000;-webkit-text-stroke:0.3px #000;">2026-01-30</span>
<span class="t" role="gridcell" style="left:2012.81px;top:733px;font-size:24.5px;letter-spacing:0.600px;transform:scaleX(1.0352);color:#000;-webkit-text-stroke:0.3px #000;">0.00</span>
<span class="t" role="gridcell" style="left:2111.82px;top:733px;font-size:24.5px;letter-spacing:0.600px;transform:scaleX(1.0313);color:#000;-webkit-text-stroke:0.3px #000;">2026-01-3...</span>
<span class="t" role="gridcell" style="left:2511.81px;top:733px;font-size:24.5px;letter-spacing:0.600px;transform:scaleX(1.0328);color:#000;-webkit-text-stroke:0.3px #000;">2026-01-3...</span>
</div>
<div role="row">
<div class="b" style="left:488px;top:826px;width:2332px;height:2px;background:#c7cbce"></div>
<div class="b" style="left:512px;top:784px;width:32px;height:32px;border:2px solid #7c8b8b;border-radius:7px;background:#f3f3f3"></div>
<span class="t" role="gridcell" style="left:711.83px;top:789px;font-size:24.5px;letter-spacing:-0.302px;color:#000;-webkit-text-stroke:0.3px #000;">STOADJ</span>
<span class="t" role="gridcell" style="left:911.61px;top:789px;font-size:24.5px;letter-spacing:0.600px;transform:scaleX(1.0409);color:#000;-webkit-text-stroke:0.3px #000;">1000447</span>
<span class="t" role="gridcell" style="left:1111.29px;top:789px;font-size:24.5px;letter-spacing:-0.327px;color:#000;-webkit-text-stroke:0.3px #000;">FINAL</span>
<span class="t" role="gridcell" style="left:1311.84px;top:789px;font-size:24.5px;letter-spacing:-0.350px;transform:scaleX(0.9875);color:#000;-webkit-text-stroke:0.3px #000;">STOCK BR...</span>
<span class="t" role="gridcell" style="left:1512.19px;top:789px;font-size:24.5px;letter-spacing:0.600px;transform:scaleX(1.0546);color:#000;-webkit-text-stroke:0.3px #000;">2026-01-30</span>
<span class="t" role="gridcell" style="left:2012.81px;top:789px;font-size:24.5px;letter-spacing:0.600px;transform:scaleX(1.0352);color:#000;-webkit-text-stroke:0.3px #000;">0.00</span>
<span class="t" role="gridcell" style="left:2111.82px;top:789px;font-size:24.5px;letter-spacing:0.600px;transform:scaleX(1.0313);color:#000;-webkit-text-stroke:0.3px #000;">2026-01-3...</span>
<span class="t" role="gridcell" style="left:2511.81px;top:789px;font-size:24.5px;letter-spacing:0.600px;transform:scaleX(1.0328);color:#000;-webkit-text-stroke:0.3px #000;">2026-01-3...</span>
</div>
<div>
<div class="b" style="left:2820px;top:530px;width:42px;height:1036px;background:#f2f3f5;border-left:2px solid #adb5bb"></div>
<div class="b" style="left:2820px;top:562px;width:42px;height:2px;background:#adb5bb"></div>
<div class="b" style="left:2820px;top:733px;width:42px;height:3.5px;background:#adb5bb"></div>
<div class="b" style="left:2820px;top:877px;width:42px;height:2px;background:#adb5bb"></div>
<div role="button">
<svg class="i" style="left:2831px;top:587px" width="22" height="18" viewBox="0 0 22 18"><path d="M2.1 0v18M8.2 0v18M14.3 0v18M20 0v18" stroke="#000" stroke-width="2.4" fill="none"/></svg>
<span class="t" style="left:2853.40px;top:618.35px;font-size:24.5px;letter-spacing:0.124px;color:#000;transform-origin:0 0;transform:rotate(90deg);">Columns</span>
</div>
<div role="button">
<svg class="i" style="left:2831px;top:758px" width="22" height="21" viewBox="0 0 22 21"><path d="M3 2.2 H19 L12.3 10.5 V15.2 L9 18 V10.5 Z" fill="none" stroke="#000" stroke-width="2.2" stroke-linejoin="miter"/></svg>
<span class="t" style="left:2853.60px;top:790.69px;font-size:24.5px;letter-spacing:0.448px;color:#000;transform-origin:0 0;transform:rotate(90deg);">Filters</span>
</div>
</div>
<div class="b" style="left:488px;top:1536px;width:2332px;height:30px;background:#ededed;border-top:2px solid #d6d6d6"></div>
<div class="b" style="left:494px;top:1544px;width:2080px;height:16px;background:#b6b6b6;border-radius:8px"></div>
</section>
</main>
<header id="topbar">
<div class="b" style="left:0px;top:0px;width:2940px;height:128px;background:#05172f"></div>
<svg class="i" style="left:36px;top:41px;" width="48" height="48" viewBox="0 0 24 24"><path fill="#e6e9fa" d="M3 18h18v-2H3v2zm0-5h18v-2H3v2zm0-7v2h18V6H3z"/></svg>
<svg class="i" style="left:136px;top:34px" width="64" height="56" viewBox="136 34 64 56">
<path d="M165.300 39.800 C164.400 39.600 163 40.600 162.200 42 L143.400 75.200 C142.600 76.800 143 78.400 144.300 78.700 L165.300 66.900 Z" fill="#b84a41" stroke="#b84a41" stroke-width="1.600" stroke-linejoin="round"/>
<path d="M168.700 39.800 C169.600 39.600 171 40.600 171.800 42 L190.600 75.200 C191.400 76.800 191 78.400 189.700 78.700 L168.700 66.900 Z" fill="#479a68" stroke="#479a68" stroke-width="1.600" stroke-linejoin="round"/>
<path d="M167 69.400 L144.800 81.200 C145.600 82.800 147.200 83.600 149 83.600 L185 83.600 C186.800 83.600 188.400 82.800 189.200 81.200 Z" fill="#3669dd" stroke="#3669dd" stroke-width="2" stroke-linejoin="round"/>
</svg>
<span class="t" style="left:198.12px;top:32px;font-size:58px;letter-spacing:-0.350px;transform:scaleX(0.9660);font-weight:700;color:#dfe0e8;">akaun</span>
<svg class="i" style="left:2820px;top:25px" width="80" height="80" viewBox="0 0 80 80">
<defs><clipPath id="avh"><circle cx="40" cy="40" r="40"/></clipPath>
<linearGradient id="avhs" x1="0" y1="0" x2="1" y2="0"><stop offset="0" stop-color="#c0927e"/><stop offset=".45" stop-color="#d2a793"/><stop offset="1" stop-color="#bd8f7b"/></linearGradient></defs>
<g clip-path="url(#avh)">
<rect width="80" height="80" fill="#eef0f7"/>
<path d="M0 80 L3 63 C10 59 17 57 23 54 L29 50 L52 50 L57 54 C63 57 70 58 77 61 L80 80 Z" fill="#d3d4e4"/>
<path d="M23 54 L29 50 L34.500 64 L31 70 Z" fill="#dcdcea"/><path d="M57 54 L52 50 L46.500 64 L50 70 Z" fill="#dcdcea"/>
<path d="M30 49 L51 49 L46.500 64 L34.500 64 Z" fill="#b88a77"/>
<path d="M33 64.400 L47.200 64.400 L45.200 69 L46.200 80 L34.200 80 L35.200 69 Z" fill="#6f6882"/>
<path d="M35.500 69 L44.800 69 L45.500 74 L34.800 74 Z" fill="#7d768f"/>
<ellipse cx="15.300" cy="36" rx="3.400" ry="6.200" fill="#c2927f"/>
<ellipse cx="65" cy="36" rx="3.400" ry="6.200" fill="#c2927f"/>
<path d="M19 26 C19 20 25 16 40 16 C55 16 61.500 20 61.500 26 L61.500 38 C61.500 47 52 57 40 57 C28 57 19 47 19 38 Z" fill="url(#avhs)"/>
<path d="M27 48.500 C31 52 35 53 40 53 C45 53 49 52 52.500 49 C51.500 55 46 57.800 40 57.800 C34 57.800 28.500 55 27 48.500 Z" fill="#2c1d1e"/>
<path d="M33 45.500 C37 44.600 43 44.600 48.500 45.500 C44 47.400 37 47.400 33 45.500 Z" fill="#9c6b62"/>
<path d="M37 39.500 C39 40.800 42 40.800 44 39.500" fill="none" stroke="#a97966" stroke-width="1.200"/>
<path d="M24.500 29.400 C27 27.600 31 27.600 34 29" fill="none" stroke="#241a1c" stroke-width="1.500"/>
<path d="M46 29 C49 27.600 53 27.600 55.500 29.400" fill="none" stroke="#241a1c" stroke-width="1.500"/>
<ellipse cx="29.300" cy="31.600" rx="3.300" ry="1.500" fill="#3a2c30"/>
<ellipse cx="50.700" cy="31.600" rx="3.300" ry="1.500" fill="#3a2c30"/>
<path d="M17.800 31 C14 24 13 18 19 13 C24 6 33 3 41 3.600 C52 3 62 8 66 15.500 C67.500 20 65 25 63 30 C62.500 31.500 61.500 32 60.600 31 C60.600 27 58.500 24 55.600 22.600 C47 24 38 25 28 26 C23.500 26.500 20.500 28.500 19.600 31.500 C19 32.500 18.200 32 17.800 31 Z" fill="#19151f"/>
</g></svg>
</header>
<div id="vscroll"><div id="vthumb"></div></div>
<div id="glow"></div>
</div>
</body>
</html>
